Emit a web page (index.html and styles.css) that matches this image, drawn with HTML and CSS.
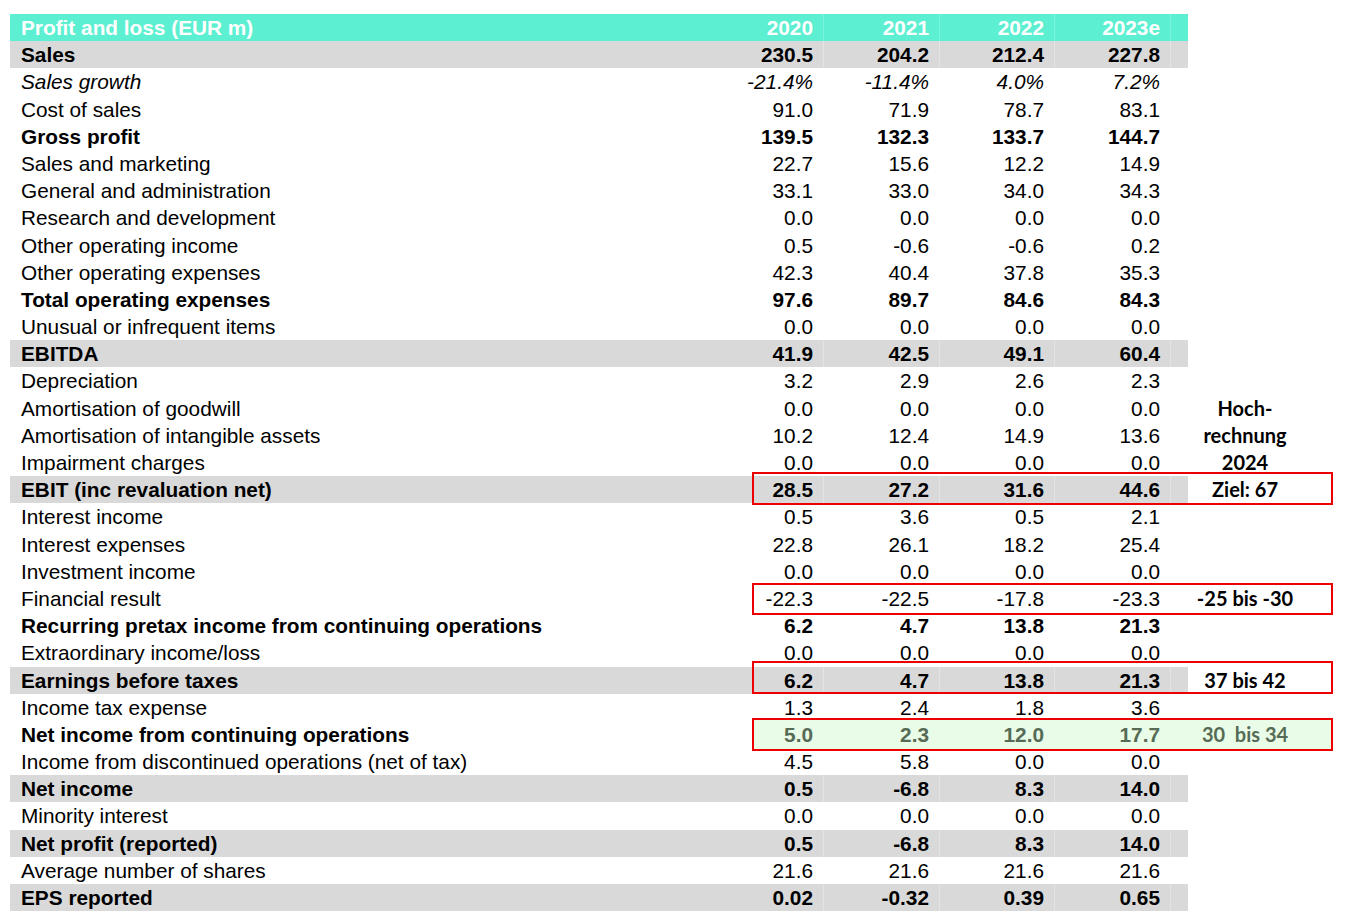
FILE: index.html
```html
<!DOCTYPE html>
<html lang="en">
<head>
<meta charset="utf-8">
<title>Profit and loss</title>
<link rel="stylesheet" href="styles.css">
</head>
<body>
<div class="pl">
  <div class="row head">
    <div class="c lbl">Profit and loss (EUR m)</div>
    <div class="c num first">2020</div><div class="c num">2021</div><div class="c num">2022</div><div class="c num">2023e</div><div class="c sp"></div><div class="c note"></div>
  </div>
  <div class="row gray b">
    <div class="c lbl">Sales</div>
    <div class="c num first">230.5</div><div class="c num">204.2</div><div class="c num">212.4</div><div class="c num">227.8</div><div class="c sp"></div><div class="c note"></div>
  </div>
  <div class="row it">
    <div class="c lbl">Sales growth</div>
    <div class="c num first">-21.4%</div><div class="c num">-11.4%</div><div class="c num">4.0%</div><div class="c num">7.2%</div><div class="c sp"></div><div class="c note"></div>
  </div>
  <div class="row">
    <div class="c lbl">Cost of sales</div>
    <div class="c num first">91.0</div><div class="c num">71.9</div><div class="c num">78.7</div><div class="c num">83.1</div><div class="c sp"></div><div class="c note"></div>
  </div>
  <div class="row b">
    <div class="c lbl">Gross profit</div>
    <div class="c num first">139.5</div><div class="c num">132.3</div><div class="c num">133.7</div><div class="c num">144.7</div><div class="c sp"></div><div class="c note"></div>
  </div>
  <div class="row">
    <div class="c lbl">Sales and marketing</div>
    <div class="c num first">22.7</div><div class="c num">15.6</div><div class="c num">12.2</div><div class="c num">14.9</div><div class="c sp"></div><div class="c note"></div>
  </div>
  <div class="row">
    <div class="c lbl">General and administration</div>
    <div class="c num first">33.1</div><div class="c num">33.0</div><div class="c num">34.0</div><div class="c num">34.3</div><div class="c sp"></div><div class="c note"></div>
  </div>
  <div class="row">
    <div class="c lbl">Research and development</div>
    <div class="c num first">0.0</div><div class="c num">0.0</div><div class="c num">0.0</div><div class="c num">0.0</div><div class="c sp"></div><div class="c note"></div>
  </div>
  <div class="row">
    <div class="c lbl">Other operating income</div>
    <div class="c num first">0.5</div><div class="c num">-0.6</div><div class="c num">-0.6</div><div class="c num">0.2</div><div class="c sp"></div><div class="c note"></div>
  </div>
  <div class="row">
    <div class="c lbl">Other operating expenses</div>
    <div class="c num first">42.3</div><div class="c num">40.4</div><div class="c num">37.8</div><div class="c num">35.3</div><div class="c sp"></div><div class="c note"></div>
  </div>
  <div class="row b">
    <div class="c lbl">Total operating expenses</div>
    <div class="c num first">97.6</div><div class="c num">89.7</div><div class="c num">84.6</div><div class="c num">84.3</div><div class="c sp"></div><div class="c note"></div>
  </div>
  <div class="row">
    <div class="c lbl">Unusual or infrequent items</div>
    <div class="c num first">0.0</div><div class="c num">0.0</div><div class="c num">0.0</div><div class="c num">0.0</div><div class="c sp"></div><div class="c note"></div>
  </div>
  <div class="row gray b">
    <div class="c lbl">EBITDA</div>
    <div class="c num first">41.9</div><div class="c num">42.5</div><div class="c num">49.1</div><div class="c num">60.4</div><div class="c sp"></div><div class="c note"></div>
  </div>
  <div class="row">
    <div class="c lbl">Depreciation</div>
    <div class="c num first">3.2</div><div class="c num">2.9</div><div class="c num">2.6</div><div class="c num">2.3</div><div class="c sp"></div><div class="c note"></div>
  </div>
  <div class="row">
    <div class="c lbl">Amortisation of goodwill</div>
    <div class="c num first">0.0</div><div class="c num">0.0</div><div class="c num">0.0</div><div class="c num">0.0</div><div class="c sp"></div><div class="c note">Hoch-</div>
  </div>
  <div class="row">
    <div class="c lbl">Amortisation of intangible assets</div>
    <div class="c num first">10.2</div><div class="c num">12.4</div><div class="c num">14.9</div><div class="c num">13.6</div><div class="c sp"></div><div class="c note">rechnung</div>
  </div>
  <div class="row">
    <div class="c lbl">Impairment charges</div>
    <div class="c num first">0.0</div><div class="c num">0.0</div><div class="c num">0.0</div><div class="c num">0.0</div><div class="c sp"></div><div class="c note">2024</div>
  </div>
  <div class="row gray b">
    <span class="box box-ebit"></span>
    <div class="c lbl">EBIT (inc revaluation net)</div>
    <div class="c num first">28.5</div><div class="c num">27.2</div><div class="c num">31.6</div><div class="c num">44.6</div><div class="c sp"></div><div class="c note">Ziel: 67</div>
  </div>
  <div class="row">
    <div class="c lbl">Interest income</div>
    <div class="c num first">0.5</div><div class="c num">3.6</div><div class="c num">0.5</div><div class="c num">2.1</div><div class="c sp"></div><div class="c note"></div>
  </div>
  <div class="row">
    <div class="c lbl">Interest expenses</div>
    <div class="c num first">22.8</div><div class="c num">26.1</div><div class="c num">18.2</div><div class="c num">25.4</div><div class="c sp"></div><div class="c note"></div>
  </div>
  <div class="row">
    <div class="c lbl">Investment income</div>
    <div class="c num first">0.0</div><div class="c num">0.0</div><div class="c num">0.0</div><div class="c num">0.0</div><div class="c sp"></div><div class="c note"></div>
  </div>
  <div class="row">
    <span class="box box-fin"></span>
    <div class="c lbl">Financial result</div>
    <div class="c num first">-22.3</div><div class="c num">-22.5</div><div class="c num">-17.8</div><div class="c num">-23.3</div><div class="c sp"></div><div class="c note">-25 bis -30</div>
  </div>
  <div class="row b">
    <div class="c lbl">Recurring pretax income from continuing operations</div>
    <div class="c num first">6.2</div><div class="c num">4.7</div><div class="c num">13.8</div><div class="c num">21.3</div><div class="c sp"></div><div class="c note"></div>
  </div>
  <div class="row">
    <div class="c lbl">Extraordinary income/loss</div>
    <div class="c num first">0.0</div><div class="c num">0.0</div><div class="c num">0.0</div><div class="c num">0.0</div><div class="c sp"></div><div class="c note"></div>
  </div>
  <div class="row gray b">
    <span class="box box-ebt"></span>
    <div class="c lbl">Earnings before taxes</div>
    <div class="c num first">6.2</div><div class="c num">4.7</div><div class="c num">13.8</div><div class="c num">21.3</div><div class="c sp"></div><div class="c note">37 bis 42</div>
  </div>
  <div class="row">
    <div class="c lbl">Income tax expense</div>
    <div class="c num first">1.3</div><div class="c num">2.4</div><div class="c num">1.8</div><div class="c num">3.6</div><div class="c sp"></div><div class="c note"></div>
  </div>
  <div class="row b green">
    <span class="box box-ni"></span>
    <div class="c lbl">Net income from continuing operations</div>
    <div class="c num first">5.0</div><div class="c num">2.3</div><div class="c num">12.0</div><div class="c num">17.7</div><div class="c sp"></div><div class="c note">30&nbsp; bis 34</div>
  </div>
  <div class="row">
    <div class="c lbl">Income from discontinued operations (net of tax)</div>
    <div class="c num first">4.5</div><div class="c num">5.8</div><div class="c num">0.0</div><div class="c num">0.0</div><div class="c sp"></div><div class="c note"></div>
  </div>
  <div class="row gray b">
    <div class="c lbl">Net income</div>
    <div class="c num first">0.5</div><div class="c num">-6.8</div><div class="c num">8.3</div><div class="c num">14.0</div><div class="c sp"></div><div class="c note"></div>
  </div>
  <div class="row">
    <div class="c lbl">Minority interest</div>
    <div class="c num first">0.0</div><div class="c num">0.0</div><div class="c num">0.0</div><div class="c num">0.0</div><div class="c sp"></div><div class="c note"></div>
  </div>
  <div class="row gray b">
    <div class="c lbl">Net profit (reported)</div>
    <div class="c num first">0.5</div><div class="c num">-6.8</div><div class="c num">8.3</div><div class="c num">14.0</div><div class="c sp"></div><div class="c note"></div>
  </div>
  <div class="row">
    <div class="c lbl">Average number of shares</div>
    <div class="c num first">21.6</div><div class="c num">21.6</div><div class="c num">21.6</div><div class="c num">21.6</div><div class="c sp"></div><div class="c note"></div>
  </div>
  <div class="row gray b">
    <div class="c lbl">EPS reported</div>
    <div class="c num first">0.02</div><div class="c num">-0.32</div><div class="c num">0.39</div><div class="c num">0.65</div><div class="c sp"></div><div class="c note"></div>
  </div>
</div>
</body>
</html>
```

FILE: styles.css
```css
html, body {
  margin: 0;
  padding: 0;
  background: #ffffff;
}

body {
  font-family: "Liberation Sans", Arial, sans-serif;
  color: #000000;
}

.pl {
  padding: 14px 0 0 10px;
  width: 1323px;
}

.row {
  position: relative;
  display: grid;
  grid-template-columns: 697px 116px 116px 115px 116px 18px 145px;
  height: 27.2px;
  font-size: 20.8px;
  line-height: 27.2px;
}

.c {
  position: relative;
  z-index: 1;
  white-space: nowrap;
}

.lbl {
  padding-left: 11px;
}

.num {
  text-align: right;
  padding-right: 10px;
  border-left: 1px solid transparent;
}

.num.first {
  border-left: 0;
}

.sp {
  border-left: 1px solid transparent;
}

.note {
  font-family: Lato, "Open Sans", sans-serif;
  font-weight: 700;
  font-size: 20px;
  text-align: center;
  padding-right: 31px;
  white-space: pre;
}

/* header */
.head .lbl,
.head .num,
.head .sp {
  background: #5cefd1;
  color: #ffffff;
  font-weight: 700;
}

.head .num:not(.first),
.head .sp {
  border-left-color: #7cf3dc;
}

/* variants */
.b .lbl,
.b .num {
  font-weight: 700;
}

.it .lbl,
.it .num {
  font-style: italic;
}

.gray .lbl,
.gray .num,
.gray .sp {
  background: #d9d9d9;
}

.gray .num:not(.first),
.gray .sp {
  border-left-color: #e4e4e4;
}

.green .num,
.green .note {
  color: #566b56;
}

/* red highlight boxes (overlay) */
.box {
  position: absolute;
  left: 742px;
  width: 581px;
  top: -4px;
  bottom: -2px;
  border: 2px solid #ee0000;
  box-sizing: border-box;
  z-index: 2;
  pointer-events: none;
}

.box-fin {
  top: -2px;
  bottom: -3px;
}

.box-ebt {
  top: -6px;
  bottom: 0;
}

.box-ni {
  top: -3px;
  bottom: -3px;
  background: #e9fce7;
  z-index: 0;
}
```
